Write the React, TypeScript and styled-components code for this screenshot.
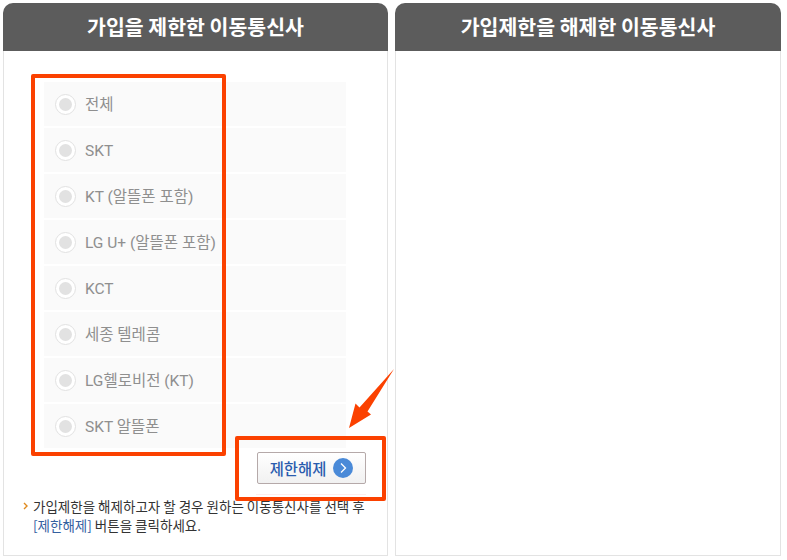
import React from "react";
import styled, { createGlobalStyle } from "styled-components";

const Global = createGlobalStyle`
  html, body { margin: 0; padding: 0; background: #fff; }
  body { font-family: "Noto Sans CJK KR", "Noto Sans", sans-serif; }
`;

const Page = styled.div`
  position: relative;
  width: 787px;
  height: 560px;
  overflow: hidden;
  box-sizing: border-box;
  padding: 3px 6px 4px 3px;
  display: grid;
  grid-template-columns: 385px 386px;
  column-gap: 7px;
`;

const Panel = styled.section`
  display: flex;
  flex-direction: column;
  height: 553px;
`;

const Header = styled.h2`
  margin: 0;
  height: 48px;
  flex: none;
  background: #5c5c5c;
  border-radius: 10px 10px 0 0;
  color: #fff;
  font-size: 20.5px;
  font-weight: 700;
  line-height: 46px;
  text-align: center;
`;

const Body = styled.div`
  flex: 1;
  box-sizing: border-box;
  border: 1px solid #e3e3e3;
  border-top: 0;
  padding: 31px 18px 0 19px;
  display: flex;
  flex-direction: column;
`;

const List = styled.ul`
  list-style: none;
  margin: 0 0 0 21px;
  padding: 0;
  width: 302px;
  display: flex;
  flex-direction: column;
  gap: 2px;
`;

const Row = styled.li`
  height: 44px;
  background: #fafafa;
  display: flex;
  align-items: center;
  padding-left: 11px;
  box-sizing: border-box;
  gap: 9px;
  color: #8f8f8f;
  font-family: Roboto, "Noto Sans CJK KR", sans-serif;
  font-size: 15.5px;
  font-weight: 400;
  white-space: nowrap;
`;

const RowLabel = styled.span`
  display: block;
  height: 22px;
  line-height: 24px;
`;

const Radio = styled.span`
  width: 21px;
  height: 21px;
  flex: none;
  box-sizing: border-box;
  border: 1px solid #e2e2e2;
  border-radius: 50%;
  background: #fff;
  display: flex;
  align-items: center;
  justify-content: center;
  &::after {
    content: "";
    width: 13px;
    height: 13px;
    border-radius: 50%;
    background: #e2e2e2;
  }
`;

const Actions = styled.div`
  display: flex;
  justify-content: flex-end;
  padding-top: 4px;
  height: 42px;
  border-bottom: 1px solid #fdeeee;
  margin: 0 3px 0 233px;
`;

const ReleaseButton = styled.button`
  width: 109px;
  height: 32px;
  box-sizing: border-box;
  padding: 0;
  border: 1px solid #b5a9a9;
  border-radius: 2px;
  background: linear-gradient(#ffffff, #f1f1f1);
  color: #2a5cae;
  font-family: inherit;
  font-size: 15.4px;
  font-weight: 500;
  display: flex;
  align-items: center;
  justify-content: center;
  gap: 7px;
`;

const Chevron = styled.span`
  width: 20px;
  height: 20px;
  border-radius: 50%;
  background: #4a8ad8;
  display: flex;
  align-items: center;
  justify-content: center;
`;

const Note = styled.p`
  position: relative;
  margin: 2px 0 0 10px;
  color: #333;
  font-size: 13.5px;
  line-height: 19px;
  white-space: nowrap;
`;

const NoteMark = styled.svg`
  position: absolute;
  left: -10px;
  top: 5px;
`;

const Accent = styled.span`
  color: #35609f;
`;

const Callout = styled.div<{ $x: number; $y: number; $w: number; $h: number }>`
  position: absolute;
  left: ${p => p.$x}px;
  top: ${p => p.$y}px;
  width: ${p => p.$w}px;
  height: ${p => p.$h}px;
  box-sizing: border-box;
  border: 4px solid #fb4100;
  border-radius: 2px;
  pointer-events: none;
`;

const Arrow = styled.svg`
  position: absolute;
  left: 345px;
  top: 365px;
`;

const carriers = [
  "전체",
  "SKT",
  "KT (알뜰폰 포함)",
  "LG U+ (알뜰폰 포함)",
  "KCT",
  "세종 텔레콤",
  "LG헬로비전 (KT)",
  "SKT 알뜰폰",
];

export default function App() {
  return (
    <Page>
      <Global />
      <Panel>
        <Header>가입을 제한한 이동통신사</Header>
        <Body>
          <List>
            {carriers.map(c => (
              <Row key={c}>
                <Radio />
                <RowLabel>{c}</RowLabel>
              </Row>
            ))}
          </List>
          <Actions>
            <ReleaseButton type="button">
              제한해제
              <Chevron>
                <svg width="10" height="12" viewBox="0 0 10 12" fill="none">
                  <path d="M3 1.5 L7.5 6 L3 10.5" stroke="#fff" strokeWidth="1.3" />
                </svg>
              </Chevron>
            </ReleaseButton>
          </Actions>
          <Note>
            <NoteMark width="5" height="8" viewBox="0 0 5 8" fill="none">
              <path d="M1 1 L4 4 L1 7" stroke="#e08a1e" strokeWidth="1.4" />
            </NoteMark>
            가입제한을 해제하고자 할 경우 원하는 이동통신사를 선택 후
            <br />
            <Accent>[제한해제]</Accent> 버튼을 클릭하세요.
          </Note>
        </Body>
      </Panel>
      <Panel>
        <Header>가입제한을 해제한 이동통신사</Header>
        <Body />
      </Panel>
      <Callout $x={31} $y={74} $w={195} $h={382} />
      <Callout $x={235} $y={436} $w={151} $h={65} />
      <Arrow width="52" height="66" viewBox="0 0 52 66">
        <path d="M49 4 L22.5 46.5 L26 49.5 L4 63 L10.5 38.5 L14.5 42.5 Z" fill="#fb4100" />
      </Arrow>
    </Page>
  );
}
